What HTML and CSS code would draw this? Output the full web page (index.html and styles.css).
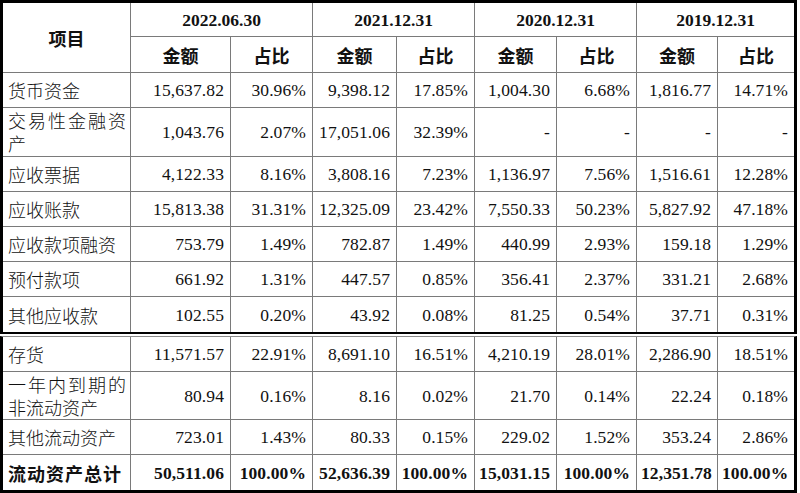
FILE: index.html
```html
<!DOCTYPE html>
<html lang="zh">
<head>
<meta charset="utf-8">
<link rel="stylesheet" href="styles.css">
</head>
<body>
<table class="tbl tbl-top">
  <colgroup>
    <col class="c0"><col class="c1"><col class="c2"><col class="c3"><col class="c4"><col class="c5"><col class="c6"><col class="c7"><col class="c8">
  </colgroup>
  <tr class="h1">
    <th rowspan="2" class="zh">项目</th>
    <th colspan="2" class="date">2022.06.30</th>
    <th colspan="2" class="date">2021.12.31</th>
    <th colspan="2" class="date">2020.12.31</th>
    <th colspan="2" class="date last">2019.12.31</th>
  </tr>
  <tr class="h2">
    <th class="zh">金额</th><th class="zh">占比</th>
    <th class="zh">金额</th><th class="zh">占比</th>
    <th class="zh">金额</th><th class="zh">占比</th>
    <th class="zh">金额</th><th class="zh last">占比</th>
  </tr>
  <tr class="r">
    <td class="name">货币资金</td><td>15,637.82</td><td>30.96%</td><td>9,398.12</td><td>17.85%</td><td>1,004.30</td><td>6.68%</td><td>1,816.77</td><td class="last">14.71%</td>
  </tr>
  <tr class="r2">
    <td class="name just">交易性金融资产</td><td>1,043.76</td><td>2.07%</td><td>17,051.06</td><td>32.39%</td><td>-</td><td>-</td><td>-</td><td class="last">-</td>
  </tr>
  <tr class="r">
    <td class="name">应收票据</td><td>4,122.33</td><td>8.16%</td><td>3,808.16</td><td>7.23%</td><td>1,136.97</td><td>7.56%</td><td>1,516.61</td><td class="last">12.28%</td>
  </tr>
  <tr class="r">
    <td class="name">应收账款</td><td>15,813.38</td><td>31.31%</td><td>12,325.09</td><td>23.42%</td><td>7,550.33</td><td>50.23%</td><td>5,827.92</td><td class="last">47.18%</td>
  </tr>
  <tr class="r">
    <td class="name">应收款项融资</td><td>753.79</td><td>1.49%</td><td>782.87</td><td>1.49%</td><td>440.99</td><td>2.93%</td><td>159.18</td><td class="last">1.29%</td>
  </tr>
  <tr class="r">
    <td class="name">预付款项</td><td>661.92</td><td>1.31%</td><td>447.57</td><td>0.85%</td><td>356.41</td><td>2.37%</td><td>331.21</td><td class="last">2.68%</td>
  </tr>
  <tr class="r rlast">
    <td class="name">其他应收款</td><td>102.55</td><td>0.20%</td><td>43.92</td><td>0.08%</td><td>81.25</td><td>0.54%</td><td>37.71</td><td class="last">0.31%</td>
  </tr>
</table>
<table class="tbl tbl-bottom">
  <colgroup>
    <col class="c0"><col class="c1"><col class="c2"><col class="c3"><col class="c4"><col class="c5"><col class="c6"><col class="c7"><col class="c8">
  </colgroup>
  <tr class="r">
    <td class="name">存货</td><td>11,571.57</td><td>22.91%</td><td>8,691.10</td><td>16.51%</td><td>4,210.19</td><td>28.01%</td><td>2,286.90</td><td class="last">18.51%</td>
  </tr>
  <tr class="r2b">
    <td class="name just">一年内到期的非流动资产</td><td>80.94</td><td>0.16%</td><td>8.16</td><td>0.02%</td><td>21.70</td><td>0.14%</td><td>22.24</td><td class="last">0.18%</td>
  </tr>
  <tr class="r">
    <td class="name">其他流动资产</td><td>723.01</td><td>1.43%</td><td>80.33</td><td>0.15%</td><td>229.02</td><td>1.52%</td><td>353.24</td><td class="last">2.86%</td>
  </tr>
  <tr class="r rlast total">
    <td class="name">流动资产总计</td><td>50,511.06</td><td>100.00%</td><td>52,636.39</td><td>100.00%</td><td>15,031.15</td><td>100.00%</td><td>12,351.78</td><td class="last">100.00%</td>
  </tr>
</table>
</body>
</html>
```

FILE: styles.css
```css
html, body {
  margin: 0;
  padding: 0;
  background: #fff;
}

.tbl {
  table-layout: fixed;
  border-collapse: separate;
  border-spacing: 0;
  width: 797px;
  border: 3px solid #000;
  color: #111;
  font-family: "Liberation Serif", "Noto Sans CJK SC", serif;
  font-size: 17.5px;
}

.tbl-top {
  border-bottom-width: 2px;
}

.tbl-bottom {
  margin-top: 2px;
  border-top: 1px solid #8a8a8a;
}

.c0 { width: 128px; }
.c1 { width: 100px; }
.c2 { width: 82px; }
.c3 { width: 84px; }
.c4 { width: 78px; }
.c5 { width: 82px; }
.c6 { width: 80px; }
.c7 { width: 81px; }
.c8 { width: 76px; }

.tbl th,
.tbl td {
  border-right: 1px solid #7a7a7a;
  border-bottom: 1px solid #7a7a7a;
  padding: 0 6px 0 4px;
  vertical-align: middle;
  white-space: nowrap;
  overflow: hidden;
  line-height: 22px;
}

.tbl .last {
  border-right: none;
}

.tbl .rlast td {
  border-bottom: none;
}

.tbl th {
  font-weight: bold;
  text-align: center;
  padding: 0;
}

.tbl th.zh {
  font-family: "Noto Sans CJK SC", sans-serif;
  font-size: 18px;
}

.tbl th.date {
  font-family: "Liberation Serif", serif;
  font-size: 17.5px;
}

.h1 { height: 34px; }
.h2 { height: 36px; }
.r { height: 35px; }
.rlast { height: 35px; }
.r2 { height: 49px; }
.r2b { height: 48px; }

.tbl td {
  text-align: right;
  letter-spacing: 0.1px;
}

.tbl td.name {
  text-align: left;
  font-family: "Noto Sans CJK SC", sans-serif;
  font-size: 18px;
  font-weight: 300;
  padding-left: 5px;
  padding-right: 4px;
  letter-spacing: 0;
}

.tbl td.just {
  white-space: normal;
  text-align: justify;
  line-height: 23px;
}

.total td {
  font-weight: bold;
}

.total td.name {
  font-weight: bold;
  letter-spacing: 1px;
}
```
